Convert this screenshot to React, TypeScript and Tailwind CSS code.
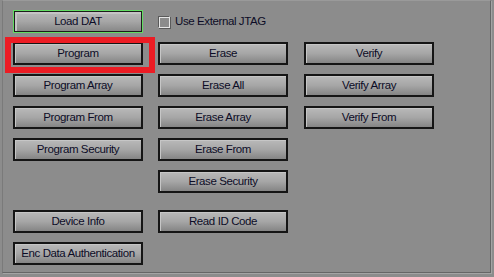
import React from "react";

// classic win-style gray button
const Btn = ({ label, green = false }: { label: string; green?: boolean }) => {
  return (
    <button
      className={`w-[130px] h-[23px] flex items-center justify-center text-[11.5px] tracking-[-0.4px] text-[#0c0c26] bg-gradient-to-b from-[#b9b9b9] via-[#a6a6a6] to-[#858585] ${
        green
          ? "border border-[#62dc62] shadow-[inset_0_0_0_1px_#1c1c1c,inset_1px_1px_0_2px_#c4c4c4]"
          : "border-2 border-[#151515] shadow-[inset_1px_1px_0_#c6c6c6]"
      }`}
      style={{ fontFamily: '"Liberation Sans", Arial, sans-serif' }}
    >
      {label}
    </button>
  );
};

const App = () => {
  return (
    <div
      className="w-[494px] h-[277px] bg-[#8c8c8c] pl-[2px] overflow-hidden"
      style={{ fontFamily: '"Liberation Sans", Arial, sans-serif' }}
    >
      <div className="w-[489px] h-[273px] border-t border-l border-t-[#9a9a9a] border-l-[#7a7a7a] border-r border-b border-r-[#666666] border-b-[#666666] shadow-[1px_1px_0_#a4a4a4] pt-[9px] pl-[10px]">
        <div className="grid grid-cols-[130px_130px_130px] gap-x-[15px] gap-y-[9px]">
          <Btn label="Load DAT" green />
          <label className="col-span-2 flex items-center gap-[5px] text-[11.5px] tracking-[-0.4px] text-[#0c0c26] pt-[1px]">
            <span className="w-[12px] h-[12px] border border-t-[#5a5a5a] border-l-[#5a5a5a] border-r-[#e6e6e6] border-b-[#e6e6e6] shadow-[inset_1px_1px_0_#e6e6e6,1px_1px_0_#5a5a5a]" />
            Use External JTAG
          </label>

          <div className="relative">
            <Btn label="Program" />
            <div className="absolute left-[-8px] top-[-5px] w-[150px] h-[36px] border-[6px] border-[#ec1c24] pointer-events-none" />
          </div>
          <Btn label="Erase" />
          <div className="ml-px">
            <Btn label="Verify" />
          </div>

          <Btn label="Program Array" />
          <Btn label="Erase All" />
          <div className="ml-px">
            <Btn label="Verify Array" />
          </div>

          <Btn label="Program From" />
          <Btn label="Erase Array" />
          <div className="ml-px">
            <Btn label="Verify From" />
          </div>

          <Btn label="Program Security" />
          <Btn label="Erase From" />
          <div />

          <div />
          <Btn label="Erase Security" />
          <div />

          <div className="mt-[8px]">
            <Btn label="Device Info" />
          </div>
          <div className="mt-[8px]">
            <Btn label="Read ID Code" />
          </div>
          <div />

          <Btn label="Enc Data Authentication" />
        </div>
      </div>
    </div>
  );
};

export default App;
